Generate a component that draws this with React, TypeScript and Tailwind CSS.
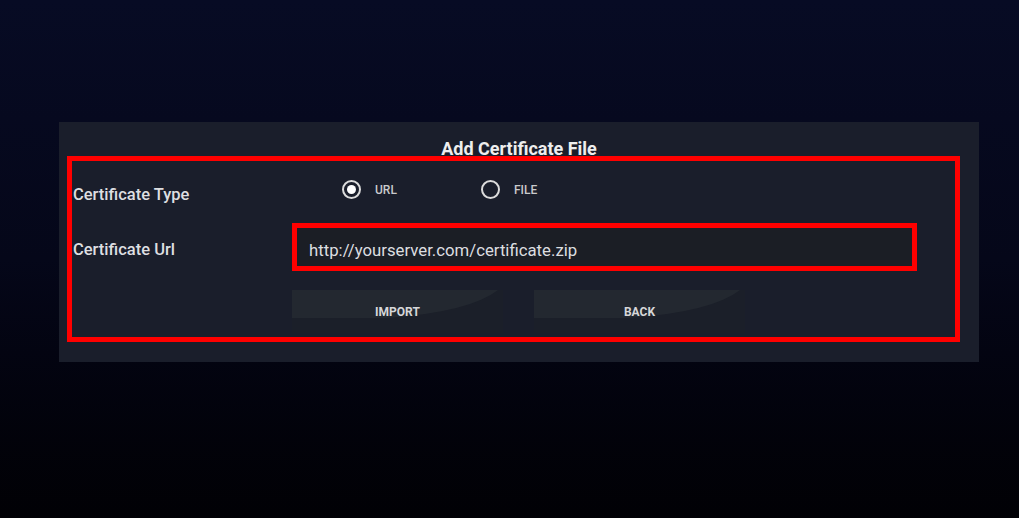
import React, { useState } from "react";

type CertType = "url" | "file";

const Radio: React.FC<{ checked: boolean; label: string; onClick: () => void }> = ({
  checked,
  label,
  onClick,
}) => (
  <button type="button" onClick={onClick} className="flex items-center gap-[14px]">
    <span className="flex h-[19px] w-[19px] items-center justify-center rounded-full border-2 border-[#dcdcdc]">
      {checked && <span className="h-[9px] w-[9px] rounded-full bg-white" />}
    </span>
    <span className="text-[12px] font-medium text-[#c9cacc]">{label}</span>
  </button>
);

const GlossButton: React.FC<{ label: string }> = ({ label }) => (
  <button
    type="button"
    className="relative flex h-[43px] w-[211px] items-end justify-center bg-[#1b1f29] pb-[12px] text-[12px] font-bold text-[#d6d7d9]"
  >
    {/* glossy top band */}
    <svg className="absolute left-0 top-0" width="211" height="29" viewBox="0 0 211 29">
      <path d="M0 0 H206 Q178 22 95 28 H0 Z" fill="#232830" />
    </svg>
    <span className="relative">{label}</span>
  </button>
);

const App: React.FC = () => {
  const [type, setType] = useState<CertType>("url");
  const [url, setUrl] = useState("http://yourserver.com/certificate.zip");

  return (
    <div
      className="h-[518px] w-full overflow-hidden bg-gradient-to-b from-[#070b24] via-[#050719] to-[#010105] pt-[122px] pl-[59px]"
      style={{ fontFamily: "Roboto, 'Liberation Sans', sans-serif" }}
    >
      <div className="relative w-[920px] bg-[#1a1e2b] pl-[14px] pt-[16px] pb-[29px]">
        <h2 className="-ml-[14px] h-[21px] text-center text-[18px] font-bold leading-[21px] text-[#eeeeee]">
          Add Certificate File
        </h2>

        {/* certificate type */}
        <div className="mt-[21px] flex h-[28px] items-start">
          <div className="w-[219px] pt-[4px] text-[16.5px] font-medium leading-[21px] text-[#dedfe1]">
            Certificate Type
          </div>
          <div className="flex gap-[84px] pl-[50px]">
            <Radio checked={type === "url"} label="URL" onClick={() => setType("url")} />
            <Radio checked={type === "file"} label="FILE" onClick={() => setType("file")} />
          </div>
        </div>

        {/* certificate url */}
        <div className="mt-[15px] flex items-center">
          <div className="w-[219px] pt-[5px] text-[16.5px] font-medium leading-[21px] text-[#dedfe1]">
            Certificate Url
          </div>
          <input
            value={url}
            onChange={(e) => setUrl(e.target.value)}
            className="h-[48px] w-[625px] border-[5px] border-[#ff0000] bg-[#1b1e25] pl-[12px] pt-[6px] text-[16.75px] text-[#dddee0] outline-none"
          />
        </div>

        {/* buttons */}
        <div className="mt-[19px] flex gap-[31px] pl-[219px]">
          <GlossButton label="IMPORT" />
          <GlossButton label="BACK" />
        </div>

        {/* annotation box */}
        <div className="pointer-events-none absolute left-[8px] top-[34px] h-[186px] w-[893px] border-[5px] border-[#ff0000]" />
      </div>
    </div>
  );
};

export default App;
